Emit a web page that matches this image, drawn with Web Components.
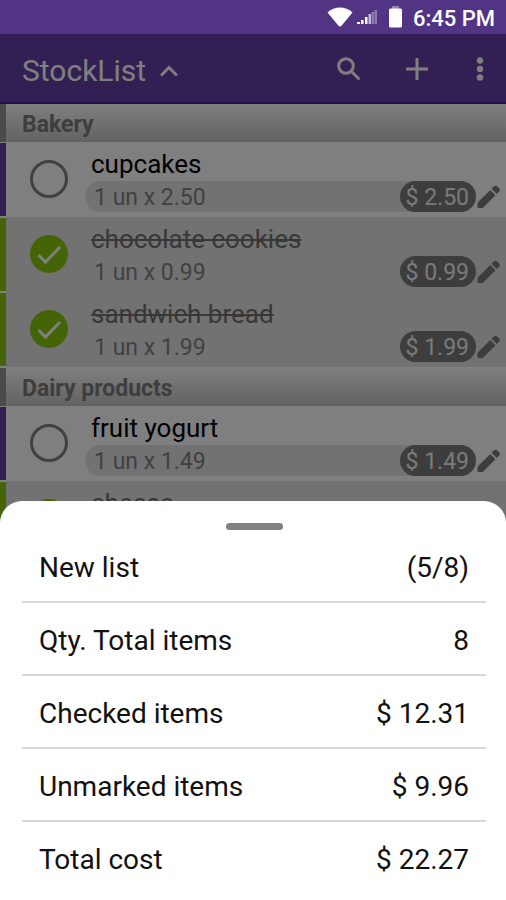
<!DOCTYPE html>
<html lang="en">
<head>
<meta charset="utf-8">
<meta name="viewport" content="width=device-width, initial-scale=1">
<title>StockList</title>
<style>
  body { margin: 0; font-family: Roboto, "Liberation Sans", sans-serif; }
</style>
</head>
<body>
<stock-app>
  <status-bar slot="status">6:45 PM</status-bar>
  <app-bar slot="bar">StockList</app-bar>
  <stock-section label="Bakery">
    <stock-item name="cupcakes" amount="1 un x 2.50" price="$ 2.50"></stock-item>
    <stock-item name="chocolate cookies" amount="1 un x 0.99" price="$ 0.99" checked></stock-item>
    <stock-item name="sandwich bread" amount="1 un x 1.99" price="$ 1.99" checked></stock-item>
  </stock-section>
  <stock-section label="Dairy products">
    <stock-item name="fruit yogurt" amount="1 un x 1.49" price="$ 1.49"></stock-item>
    <stock-item name="cheese" checked></stock-item>
  </stock-section>
  <summary-sheet slot="sheet">
    <summary-row label="New list">(5/8)</summary-row>
    <summary-row label="Qty. Total items">8</summary-row>
    <summary-row label="Checked items">$ 12.31</summary-row>
    <summary-row label="Unmarked items">$ 9.96</summary-row>
    <summary-row label="Total cost">$ 22.27</summary-row>
  </summary-sheet>
</stock-app>

<script>
const define = (name, html, setup) => {
  const template = document.createElement('template');
  template.innerHTML = html;
  customElements.define(name, class extends HTMLElement {
    constructor() {
      super();
      this.attachShadow({ mode: 'open' }).append(template.content.cloneNode(true));
    }
    connectedCallback() { if (setup) setup(this, this.shadowRoot); }
  });
};

define('stock-app', `
  <style>
    :host { display: flex; flex-direction: column; position: relative; height: 100vh; overflow: hidden; background: #fff; }
    .content { position: relative; flex: 1; min-height: 0; overflow: hidden; display: flex; flex-direction: column; }
    main { display: flex; flex-direction: column; gap: 1px; }
    .scrim { position: absolute; inset: 0; background: rgba(0, 0, 0, .5); }
    .sheet { position: absolute; left: 0; right: 0; bottom: 0; }
  </style>
  <slot name="status"></slot>
  <div class="content">
    <slot name="bar"></slot>
    <main><slot></slot></main>
    <div class="scrim"></div>
    <div class="sheet"><slot name="sheet"></slot></div>
  </div>`);

define('status-bar', `
  <style>
    :host { display: flex; align-items: center; justify-content: flex-end; height: 34px; padding-right: 11px;
      box-sizing: border-box; background: #523485; color: #fff; font-size: 22px; line-height: 34px; font-weight: 500; }
    svg { display: block; fill: #fff; }
    .wifi { margin-right: 4px; }
    .signal { margin-right: 12px; }
    .battery { margin-right: 11px; }
    span { padding-top: 4px; }
  </style>
  <svg class="wifi" width="26" height="20" viewBox="0 0 26 20"><path d="M0.500 5.500Q6 .5 13 .5T25.500 5.500L14.500 18.800Q13 20.400 11.500 18.800Z"/></svg>
  <svg class="signal" width="20" height="16" viewBox="0 0 20 16"><path d="M0 13h3v2H0zM4 11h2.500v4H4zM8 8h2.500v7H8z"/><path opacity=".65" d="M11.500 5H14v10h-2.500z"/><path opacity=".35" d="M14.500 3H17v12h-2.500zM17.500 1H20v14h-2.500z"/></svg>
  <svg class="battery" width="13" height="22" viewBox="0 0 13 22"><path opacity=".4" d="M3 0h7v3H3z"/><rect y="2.500" width="13" height="19" rx="1.500"/></svg>
  <span><slot></slot></span>`);

define('app-bar', `
  <style>
    :host { display: flex; align-items: center; height: 70px; box-sizing: border-box; padding: 2px 9px 0 22px;
      background: #643ea6; border-bottom: 2px solid #4a2090; color: #fff; flex: none; }
    button { display: grid; place-items: center; border: 0; padding: 0; background: none; color: inherit; font: inherit; }
    .title { display: flex; gap: 14px; font-size: 30px; line-height: 34px; padding-top: 4px; margin-right: auto; }
    .icon { width: 40px; height: 48px; }
    .search { margin-right: 28px; }
    .add { margin-right: 28px; }
    .more { width: 30px; margin-right: 2px; }
    svg { display: block; fill: none; stroke: currentColor; stroke-width: 3; }
  </style>
  <button class="title"><slot></slot><svg width="18" height="12" viewBox="0 0 18 12"><path d="M1 10.500 9 2.500l8 8"/></svg></button>
  <button class="icon search" aria-label="Search"><svg width="24" height="24" viewBox="0 0 24 24"><circle cx="9" cy="9" r="7.300"/><path d="M14.500 14.500 22.500 22.500"/></svg></button>
  <button class="icon add" aria-label="Add item"><svg width="24" height="24" viewBox="0 0 24 24"><path d="M12 1v22M1 12h22"/></svg></button>
  <button class="icon more" aria-label="More options"><svg width="8" height="24" viewBox="0 0 8 24"><g fill="currentColor" stroke="none"><circle cx="4" cy="3.500" r="3.200"/><circle cx="4" cy="12" r="3.200"/><circle cx="4" cy="20.500" r="3.200"/></g></svg></button>`);

define('stock-section', `
  <style>
    :host { display: block; }
    h2 { margin: 0; height: 38px; box-sizing: border-box; padding: 3px 16px 0; border-left: 6px solid #949494;
      background: linear-gradient(#fff, #c4c4c4); color: #7c7c7c; font-size: 23px; line-height: 36px; font-weight: 700; }
  </style>
  <h2></h2><slot></slot>`,
  (host, root) => { root.querySelector('h2').textContent = host.getAttribute('label'); });

define('stock-item', `
  <style>
    :host { display: grid; grid-template-columns: 6px 79px 1fr; height: 75px; background: #fff; }
    :host([checked]) { background: linear-gradient(90deg, #fff 6px, #e4e4e4 6px); }
    .strip { background: #623ca4; margin: 1px 0; }
    :host([checked]) .strip { background: #88c80a; }
    .tick { position: relative; justify-self: center; width: 38px; height: 38px; margin: 18px 0 0 6px; }
    input { appearance: none; display: block; width: 38px; height: 38px; margin: 0; border-radius: 50%; box-sizing: border-box; border: 3px solid #808080; }
    input:checked { border: 0; background: #88c80a; }
    .tick svg { position: absolute; inset: 0; display: none; fill: none; stroke: #fff; stroke-width: 3; pointer-events: none; }
    input:checked + svg { display: block; }
    .body { display: flex; flex-direction: column; padding-top: 6px; min-width: 0; }
    label { font-size: 26px; line-height: 33px; padding-left: 6px; color: #000; }
    :host([checked]) label { color: #707070; text-decoration: line-through; text-decoration-thickness: 2px; }
    .line { display: flex; align-items: center; }
    .meta { display: flex; flex: 1; justify-content: space-between; height: 31px; border-radius: 16px; background: #e4e4e4;
      color: #828282; font-size: 23px; line-height: 34px; }
    .amount { padding-left: 9px; }
    .price { padding: 0 7px 0 6px; border-radius: 16px; height: 31px; background: #7a7a7a; color: #f4f4f4; }
    button { border: 0; background: none; padding: 0; margin: 0 5px 0 0; color: #7a7a7a; }
    button svg { display: block; fill: currentColor; }
  </style>
  <div class="strip"></div>
  <div class="tick"><input type="checkbox" id="done"><svg width="38" height="38" viewBox="0 0 38 38"><path d="M8.500 20 15.500 27 30 12"/></svg></div>
  <div class="body">
    <label for="done"></label>
    <div class="line">
      <div class="meta"><span class="amount"></span><span class="price"></span></div>
      <button aria-label="Edit item"><svg width="25" height="25" viewBox="0 0 25 25"><path d="M2 18.300 14.300 6 19.500 11.200 7.200 23.500Q6.500 24 5.500 24H2.500Q1.500 24 1.500 23V20Q1.500 19 2 18.300ZM15.500 4.800 18 2.300Q19.500 1 21 2.300L23.300 4.600Q24.600 6 23.300 7.500L20.800 10Z"/></svg></button>
    </div>
  </div>`,
  (host, root) => {
    root.querySelector('input').checked = host.hasAttribute('checked');
    root.querySelector('label').textContent = host.getAttribute('name');
    root.querySelector('.amount').textContent = host.getAttribute('amount');
    root.querySelector('.price').textContent = host.getAttribute('price');
    if (!host.hasAttribute('price')) root.querySelector('.line').remove();
  });

define('summary-sheet', `
  <style>
    :host { display: flex; flex-direction: column; background: #fff; border-radius: 22px 22px 0 0; padding: 22px 20px 5px 22px; }
    .handle { align-self: center; width: 57px; height: 7px; border-radius: 4px; background: #808080; }
  </style>
  <div class="handle"></div>
  <slot></slot>`);

define('summary-row', `
  <style>
    :host { display: block; border-bottom: 2px solid #d8d8d8; }
    :host(:last-of-type) { border-bottom-color: transparent; }
    dl { display: flex; justify-content: space-between; margin: 0; padding: 4px 17px 0; font-size: 28px; line-height: 67px; color: #111; }
    dd { margin: 0; }
  </style>
  <dl><dt></dt><dd><slot></slot></dd></dl>`,
  (host, root) => { root.querySelector('dt').textContent = host.getAttribute('label'); });
</script>
</body>
</html>
